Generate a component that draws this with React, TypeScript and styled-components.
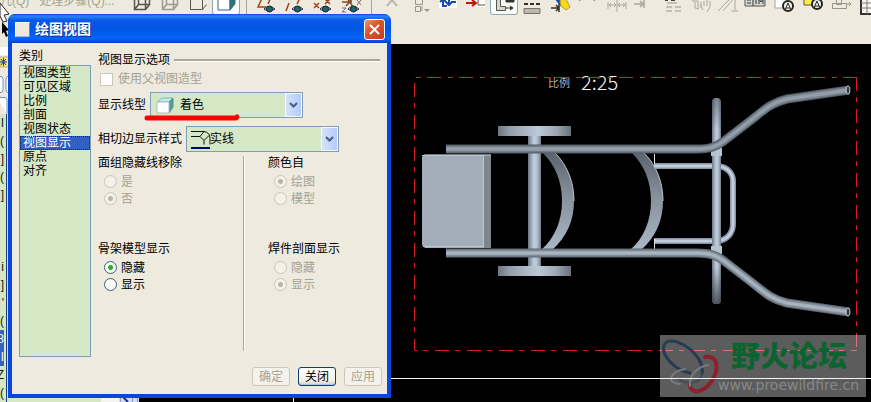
import React, { useState } from "react";
import styled, { createGlobalStyle, css } from "styled-components";

const GlobalStyle = createGlobalStyle`
  * { box-sizing: border-box; }
  body {
    margin: 0;
    background: #000;
    color: #000;
    font: 12px/14px "Liberation Sans", "Noto Sans CJK SC", sans-serif;
  }
  button, select, input { font: inherit; }
`;

const Page = styled.main`
  position: relative;
  display: flex;
  flex-direction: column;
  min-height: 100vh;
  overflow: hidden;
`;

/* ---------- toolbar ---------- */

const Toolbar = styled.header`
  display: flex;
  align-items: flex-start;
  height: 44px;
  overflow: hidden;
  background: #eeeade;
`;

const Strip = styled.div`
  display: flex;
  align-items: center;
  height: 28px;
  margin-top: -13px;
`;

const StepsLabel = styled.span`
  width: 128px;
  color: #a5a294;
  white-space: pre;
`;

const ToolButton = styled.button<{ $active?: boolean }>`
  width: 28px;
  height: 28px;
  padding: 0;
  border: 0;
  background: none;
  flex: none;
  ${(p) =>
    p.$active &&
    css`
      background: #fbfbf8;
      border-radius: 3px;
      box-shadow: inset 0 0 0 1px #8fa8bd;
    `}
  svg { display: block; }
`;

const Divider = styled.span`
  flex: none;
  width: 13px;
  height: 28px;
  background: linear-gradient(90deg, transparent 6px, #a8a597 6px, #a8a597 7px, transparent 7px);
`;

const Ico = ({ children }: { children: React.ReactNode }) => (
  <svg width="28" height="28" viewBox="0 1 28 28" fill="none" stroke="#76736a" strokeWidth="1">
    {children}
  </svg>
);

const Eye = () => (
  <g>
    <path d="M11 23Q16 18 22 23Q16 27 11 23Z" fill="#fff" stroke="#222" />
    <circle cx="16.500" cy="23" r="3" fill="#176d62" stroke="#123" />
  </g>
);

const Cube = ({ faint }: { faint?: boolean }) => (
  <g stroke={faint ? "#9c998d" : "#57544d"}>
    <path d="M6.500 10.500h11v13h-11zM10.500 6.500h11v12h-11zM6.500 23.500l4-5M17.500 23.500l4-5" strokeWidth="1.500" />
  </g>
);

const Hand = () => <path d="M6 15h6v7M9 16v6l4 1M15 22v-6M17 24l-3-5M18 15v5M21 14v6M24 15v6l-3 5" stroke="#aaa79b" />;

const tools: { name: string; active?: boolean; art: React.ReactNode }[][] = [
  [
    { name: "线框", art: <Cube /> },
    { name: "隐藏线", art: <Cube faint /> },
    { name: "无隐藏线", art: <path d="M6.500 8.500h12v15h-12zM18.500 23.500l4-5" stroke="#57544d" /> },
    {
      name: "着色",
      active: true,
      art: (
        <>
          <path d="M6 9h12v15H6z" fill="#fff" stroke="#3f6a78" />
          <path d="M18 9l5-5v14l-5 6z" fill="#28747d" stroke="#3f6a78" />
        </>
      ),
    },
  ],
  [
    { name: "基准平面", art: <><path d="M10 10L5 21h8M19 9l-4 9" stroke="#9b4519" strokeWidth="1.500" /><Eye /></> },
    { name: "基准轴", art: <><path d="M8 17l-3 8M11 10l-2 4M20 10l-4 8" stroke="#9b4519" strokeWidth="1.500" /><Eye /></> },
    { name: "基准点", art: <><path d="M5 17l5 5m0-5l-5 5M16 13l5 5m0-5l-5 5" stroke="#9b4519" strokeWidth="1.500" /><Eye /></> },
    { name: "坐标系", art: <><path d="M5 16h10M10 12l6 9M16 12l-7 8" stroke="#7d482c" strokeWidth="1.500" /><path d="M5 22h4l-4 4h4M20 14l4 5m0-5l-4 5" /><Eye /></> },
  ],
  [
    { name: "剪切", art: <path d="M9 20l5-6 5 6M14 10v4" stroke="#aaa79b" strokeWidth="1.500" /> },
    { name: "排列", art: <><path d="M9.500 13.500h7v5h-7zM9.500 20.500h5v5h-5zM16 20v5" stroke="#98958a" /><path d="M18 23h6l-3 3z" fill="#98958a" stroke="none" /></> },
    { name: "重新生成", art: <><path d="M5 8h18v14H5z" fill="#fff" stroke="none" /><path d="M13 20H9v-7m-3 3l3-3 3 3M15 13v7m-3-4l3 3 3-3M17 16h5" stroke="#164cac" strokeWidth="2" /></> },
    { name: "移动视图", art: <><path d="M14 10h9v11h-9z" fill="#fff" stroke="none" /><path d="M16 12v7h7" stroke="#55564f" /><path d="M4 17h9m-3-3l4 3-4 3" stroke="#c41313" strokeWidth="2" /></> },
    { name: "锁定视图", active: true, art: <><path d="M6.500 8v16.500h9v-4h-5V8z" fill="#d7d6cd" stroke="#55564f" /><path d="M16 13h8v3h-8zM16 22h7m-3-2l3 2-3 2" fill="#33322f" stroke="#33322f" /></> },
    { name: "线型", art: <><path d="M6 18h18" stroke="#33322f" strokeDasharray="4 2" strokeWidth="2" /><path d="M6 22.500h16v5H6z" fill="#bab8ac" /></> },
    { name: "清理尺寸", art: <><path d="M9 10l7 9" stroke="#164cac" strokeWidth="4" /><path d="M14 15l4-6 6 12-4 3-5-4z" fill="#f6d821" stroke="#b99e1a" /><path d="M5 22h8m-3-3l3 3-3 3M13 18v8" stroke="#33322f" strokeWidth="1.500" /></> },
    { name: "角度", art: <path d="M9 12l-4 3M17 12l4 3" stroke="#8c897e" /> },
    { name: "尺寸", art: <path d="M6 16v7m9-13v16m9-10v7M7 19h7m2 0h7m-14-2l-2 2 2 2m3-4l2 2-2 2m6-4l-2 2 2 2m3-4l2 2-2 2" stroke="#aaa79b" /> },
    { name: "对齐尺寸", art: <path d="M4 18h9m-3-3l3 3-3 3M14 14v8" stroke="#aaa79b" strokeWidth="1.500" /> },
    { name: "注释", art: <><path d="M7 14h3m3 0h4" stroke="#403f3a" strokeWidth="2" /><path d="M9 17h10M8 21h6m3 0h6M8 25h6m3 0h6" stroke="#98958a" /></> },
    { name: "拖动", art: <Hand /> },
    { name: "倾斜", art: <path d="M4 25l15-15M9 25l12-14M21 14v10M17 25h7" stroke="#aaa79b" /> },
    { name: "公差", art: <><path d="M3 10h20v10H3z" fill="#d2d9d3" stroke="#55564f" /><path d="M11 11v9M5 14h4m-4 3h4M14 14v4m3-5v5m0-5l2 3 2-3v5" stroke="#33322f" /></> },
    { name: "几何注释", art: <><path d="M5 10h11v12H5z" fill="#fff" stroke="#a7a499" /><circle cx="18" cy="20" r="5" fill="#f5f5ef" stroke="#25231f" strokeWidth="2" /><path d="M15 24l3-7 3 7m-5-2h4" stroke="#25231f" /></> },
    { name: "符号", art: <><path d="M6 10h11v9H6z" fill="#faef45" stroke="#55564f" /><circle cx="19" cy="18" r="5" fill="#f5f5ef" stroke="#25231f" strokeWidth="2" /><path d="M16 22l3-7 3 7m-5-2h4" stroke="#25231f" /></> },
    { name: "插入", art: <path d="M6.500 17.500h14v5h-14zM10.500 12.500h5v6h-5zM20 18h5m-2-2l2 2-2 2" stroke="#98958a" /> },
    { name: "表", art: <><path d="M7 12h16v16H7z" fill="#f6f4ec" stroke="#33322f" strokeWidth="2" /><path d="M7 17h16M7 22h16M13 13v15M19 13v15" stroke="#7c7a72" /></> },
  ],
];

/* ---------- workspace ---------- */

const Workspace = styled.div`
  flex: 1;
  display: flex;
  align-items: flex-start;
`;

const Sidebar = styled.aside`
  width: 139px;
  flex: none;
  align-self: stretch;
  display: flex;
  background: #f4f3ef;
`;

const TreePane = styled.div`
  width: 101px;
  background: linear-gradient(90deg, transparent 6px, #1f3f76 6px, #1f3f76 7px, transparent 7px) #d5e8c6;
`;

const TreeHead = styled.div`
  height: 70px;
  background: #eeeade;
  svg { display: block; }
`;

const TreeRow = styled.div<{ $selected?: boolean }>`
  display: flex;
  justify-content: flex-end;
  height: 18px;
  width: 4px;
  line-height: 18px;
  color: ${(p) => (p.$selected ? "#fff" : "#16180f")};
  background: ${(p) => (p.$selected ? "#3564c0" : "transparent")};
`;

const ScrollTrack = styled.div`
  flex: 1;
  display: flex;
  align-items: flex-end;
  justify-content: flex-end;
`;

const Viewport = styled.section`
  flex: 1;
  min-width: 0;
  background: #000;
  svg { display: block; width: 100%; }
`;

const Annotation = styled.text<{ $large?: boolean }>`
  fill: #f4f4f4;
  font-family: "Liberation Sans Narrow", "Noto Sans CJK SC", sans-serif;
  font-weight: 300;
  font-size: ${(p) => (p.$large ? 20 : 11)}px;
`;

const MarkTitle = styled.text`
  fill: #0b6430;
  font: 900 29px "Noto Sans CJK SC", sans-serif;
`;

const MarkUrl = styled.text`
  fill: #85888a;
  font: 14px "DejaVu Sans", sans-serif;
`;

const handle = "M446 149H697C709 149 716 147 724 141L750 121C763 111 770 103 787 99L849 90";
const lowerHandle = "M446 253H697C709 253 716 255 724 261L750 281C763 291 770 299 787 303L849 312";
const rib = "M555 153C568 166 574 183 574 201C574 220 567 237 552 250H541C555 238 562 220 562 201C562 181 555 165 543 153Z";
const loop = "M654 166H718C727 167 733 173 733 181V224C733 233 727 240 718 241H654";

const Tube = ({ d, tone }: { d: string; tone: string[] }) => (
  <g fill="none">
    <path d={d} stroke={tone[0]} strokeWidth="9" />
    <path d={d} stroke={tone[1]} strokeWidth="7" />
    <path d={d} stroke={tone[2]} strokeWidth="4" />
    <path d={d} stroke={tone[3]} strokeWidth="2" />
  </g>
);

function Drawing() {
  return (
    <svg viewBox="139 44 732 358" role="img" aria-label="比例 2:25">
      <defs>
        <linearGradient id="post">
          <stop offset="0" stopColor="#6c7784" />
          <stop offset=".45" stopColor="#c0cedd" />
          <stop offset=".7" stopColor="#b3c0cf" />
          <stop offset="1" stopColor="#707b88" />
        </linearGradient>
        <linearGradient id="wheel">
          <stop offset="0" stopColor="#6e7780" />
          <stop offset=".15" stopColor="#939da7" />
          <stop offset=".55" stopColor="#bccad8" />
          <stop offset=".8" stopColor="#9ca7b3" />
          <stop offset="1" stopColor="#68717b" />
        </linearGradient>
        <linearGradient id="ribShade" x1="0" y1="0" x2="0" y2="1">
          <stop offset="0" stopColor="#5b636d" />
          <stop offset=".45" stopColor="#87919c" />
          <stop offset="1" stopColor="#aab7c5" />
        </linearGradient>
        <linearGradient id="postEnds" x1="0" y1="0" x2="0" y2="1">
          <stop offset="0" stopColor="#333a42" stopOpacity=".5" />
          <stop offset=".15" stopColor="#333a42" stopOpacity="0" />
          <stop offset=".82" stopColor="#333a42" stopOpacity="0" />
          <stop offset="1" stopColor="#333a42" stopOpacity=".8" />
        </linearGradient>
      </defs>

      <Annotation x="548" y="87">比例</Annotation>
      <Annotation x="581" y="90" $large>2:25</Annotation>
      <path d="M857 77.500H414.500V350.500H857M856.500 77V351" fill="none" stroke="#d81b22" strokeDasharray="14 6 5 7" />

      <path d="M422 157l3-3h66v94h-66l-3-3z" fill="#a3adb9" />
      <path d="M484 156h7v92h-7z" fill="#7d868d" />
      <path d="M422 155.500h61.500V247M423 246.500h61" fill="none" stroke="#b9c8cf" />
      <path d="M425 154.500h66" stroke="#6c767d" />

      <path d={rib} fill="url(#ribShade)" />
      <path d="M555 153C568 166 574 183 574 201" fill="none" stroke="#bac5cf" />
      <g transform="translate(89 0)">
        <path d={rib} fill="url(#ribShade)" />
        <path d="M555 153C568 166 574 183 574 201" fill="none" stroke="#bac5cf" />
      </g>

      <path d="M498 126h73v10h-73zM498 266h73v10h-73z" fill="url(#wheel)" />
      <path d="M528 136h13v130h-13z" fill="url(#post)" />

      <g fill="none">
        <path d={loop} stroke="#8794a3" strokeWidth="6" />
        <path d={loop} stroke="#c0cddd" strokeWidth="3" />
        <path d="M654.500 154V164M654.500 239V249" stroke="#dce3e9" />
      </g>
      <rect x="712" y="98" width="9" height="206" rx="4" fill="url(#post)" />
      <rect x="712" y="98" width="9" height="206" rx="4" fill="url(#postEnds)" />
      <path d="M711 147h11v9h-11zM711 246h11v9h-11z" fill="#b6c4d2" />

      <Tube d={handle} tone={["#525a63", "#727c87", "#8e99a5", "#939eaa"]} />
      <Tube d={lowerHandle} tone={["#5e6670", "#7e8994", "#9ca8b4", "#a8b4c0"]} />
      <g fill="#343b42" stroke="#c0cbd4">
        <ellipse cx="848" cy="90" rx="2" ry="4" />
        <ellipse cx="848" cy="312" rx="2" ry="4" />
      </g>

      <path d="M660 335h206v62H660z" fill="#fff" fillOpacity=".36" />
      <g fill="none" strokeLinecap="round">
        <path d="M690 373C678 371 667 361 664 352C661 340 672 338 684 345C696 352 704 364 702 374" stroke="#263c50" strokeWidth="3" />
        <path d="M702 374C700 384 688 385 678 379" stroke="#3f4d59" strokeWidth="2" />
        <path d="M705 357C718 355 719 368 713 379C706 391 693 396 690 386" stroke="#8e1f2c" strokeWidth="4" />
        <path d="M690 386C689 375 697 367 708 365M680 384C667 384 668 372 685 369" stroke="#777b80" strokeWidth="2" />
      </g>
      <MarkTitle x="731" y="367">野火论坛</MarkTitle>
      <MarkUrl x="718" y="390">www.proewildfire.cn</MarkUrl>
      <path d="M139 378.500H871M293.500 378V402" stroke="#f4f4f4" />
    </svg>
  );
}

/* ---------- dialog ---------- */

const Dialog = styled.form`
  position: absolute;
  left: 8px;
  top: 14px;
  width: 383px;
  border: solid #0a46dc;
  border-width: 0 4px 4px;
  border-radius: 7px 7px 0 0;
  background: #eeeade;
`;

const TitleBar = styled.div`
  display: flex;
  align-items: center;
  gap: 5px;
  height: 29px;
  margin: 0 -4px;
  padding: 1px 6px 0 7px;
  border-radius: 7px 7px 0 0;
  background: linear-gradient(#0a49c8 0, #2a83f8 2px, #0a5ae6 6px, #0055e5 15px, #0565fb 24px, #0356e0 27px, #0340b8 29px);
`;

const TitleIcon = styled.span`
  width: 15px;
  height: 15px;
  background: #ece9de;
  border: 1px solid #fff;
  border-right-color: #c76b54;
  border-bottom-color: #a8b7d8;
`;

const Title = styled.h1`
  flex: 1;
  margin: 0;
  font-size: 14px;
  line-height: 18px;
  font-weight: 700;
  color: #fff;
  text-shadow: 1px 1px 0 #0b2f93;
`;

const CloseButton = styled.button`
  width: 21px;
  height: 21px;
  padding: 0;
  border: 1px solid #fff;
  border-radius: 3px;
  background: linear-gradient(135deg, #f0967a, #df5330 40%, #c83c17);
  svg { display: block; margin: auto; }
`;

const Body = styled.div`
  display: flex;
  gap: 7px;
  padding: 6px 5px 0 7px;
`;

const Categories = styled.div`
  width: 72px;
  flex: none;
`;

const CategoryList = styled.ul`
  height: 292px;
  margin: 2px 0 0;
  padding: 0;
  list-style: none;
  border: 1px solid #7f9db9;
  background: #d5e8c6;
`;

const Category = styled.button<{ $selected: boolean }>`
  display: block;
  width: 100%;
  height: 14px;
  padding: 0 0 0 3px;
  border: 0;
  text-align: left;
  line-height: 14px;
  color: #000;
  background: none;
  ${(p) =>
    p.$selected &&
    css`
      color: #fff;
      background: #2f60c2;
      outline: 1px dotted #1d2a44;
      outline-offset: -1px;
    `}
`;

const Options = styled.div`
  flex: 1;
  min-width: 0;
`;

const Heading = styled.h2`
  display: flex;
  align-items: center;
  gap: 4px;
  margin: 3px 2px 3px 0;
  font-size: 12px;
  font-weight: 400;
  line-height: 16px;
  &::after {
    content: "";
    flex: 1;
    height: 2px;
    background: #a8a698;
    border-bottom: 1px solid #fff;
  }
`;

const CheckLabel = styled.label`
  display: flex;
  align-items: center;
  gap: 5px;
  height: 16px;
  padding-left: 2px;
  color: #a5a294;
  input {
    appearance: none;
    width: 13px;
    height: 13px;
    margin: 0;
    border: 1px solid #cbc8bb;
    background: #fff;
  }
`;

const Field = styled.div`
  display: flex;
  align-items: center;
  gap: 4px;
  margin-top: 5px;
  & + & { margin-top: 8px; }
`;

const Combo = styled.div`
  position: relative;
  width: 153px;
  height: 26px;
`;

const Select = styled.select<{ $inset: number }>`
  appearance: none;
  display: block;
  width: 100%;
  height: 100%;
  padding: 0 20px 0 ${(p) => p.$inset}px;
  border: 1px solid #7f9db9;
  border-radius: 0;
  color: #000;
  background: #d5e8c6;
`;

const ComboIcon = styled.svg`
  position: absolute;
  left: 4px;
  top: 2px;
  pointer-events: none;
`;

const Arrow = styled.span`
  position: absolute;
  right: 1px;
  top: 1px;
  bottom: 1px;
  width: 17px;
  border: 1px solid #f4f8ff;
  background: linear-gradient(90deg, #d6e2fc, #b5cbf7);
  pointer-events: none;
  display: grid;
  place-items: center;
`;

const Marker = styled.svg`
  position: absolute;
  left: -6px;
  top: 20px;
  pointer-events: none;
`;

const Groups = styled.div`
  display: grid;
  grid-template-columns: 145px 1fr;
  margin-top: 4px;
`;

const Column = styled.div<{ $divided?: boolean }>`
  display: flex;
  flex-direction: column;
  gap: 35px;
  height: 195px;
  ${(p) =>
    p.$divided &&
    css`
      padding-left: 24px;
      border-left: 1px solid #a8a698;
      box-shadow: inset 1px 0 #fff;
    `}
`;

const Group = styled.fieldset`
  margin: 0;
  padding: 0;
  border: 0;
  legend {
    padding: 0;
    margin-bottom: 3px;
    line-height: 14px;
  }
`;

const RadioLabel = styled.label<{ $off?: boolean }>`
  display: flex;
  align-items: center;
  gap: 4px;
  height: 17px;
  padding-left: 6px;
  color: ${(p) => (p.$off ? "#a5a294" : "#000")};
  input {
    appearance: none;
    width: 13px;
    height: 13px;
    margin: 0;
    border: 1px solid ${(p) => (p.$off ? "#cbc8bb" : "#3b6080")};
    border-radius: 50%;
    background: ${(p) => (p.$off ? "#f3f1e8" : "#fbfbf9")};
  }
  input:checked {
    background: radial-gradient(circle, ${(p) => (p.$off ? "#b8b5a8" : "#2faa2d")} 2px, ${(p) => (p.$off ? "#f3f1e8" : "#fbfbf9")} 3px);
  }
`;

const Actions = styled.div`
  display: flex;
  justify-content: flex-end;
  gap: 8px;
  padding: 10px 5px 8px;
`;

const ActionButton = styled.button`
  width: 38px;
  height: 19px;
  padding: 0;
  border: 1px solid #123f72;
  border-radius: 3px;
  line-height: 14px;
  color: #000;
  background: linear-gradient(#fff, #f1efe6 75%, #d5d1c3);
  box-shadow: inset 0 -1px #a9bfe0;
  &:disabled {
    color: #a5a294;
    border-color: #cbc8bb;
    background: #f4f2ea;
    box-shadow: none;
  }
`;

const Cursor = styled.svg`
  position: absolute;
  left: 0;
  top: 2px;
`;

const categories = ["视图类型", "可见区域", "比例", "剖面", "视图状态", "视图显示", "原点", "对齐"];
const treeTails = ["I", "(", "]", "(", "]", "", "", "", "i", "]", "'", "(", "8", "I", "Z", "("];

const ArrowMark = () => (
  <Arrow>
    <svg width="9" height="7" viewBox="0 0 9 7">
      <path d="M1 1l3.500 3.500L8 1" fill="none" stroke="#465b85" strokeWidth="2" />
    </svg>
  </Arrow>
);

function RadioGroup({ legend, options, initial, off }: { legend: string; options: string[]; initial: string; off?: boolean }) {
  const [value, setValue] = useState(initial);
  return (
    <Group>
      <legend>{legend}</legend>
      {options.map((o) => (
        <RadioLabel key={o} $off={off}>
          <input type="radio" name={legend} disabled={off} checked={value === o} onChange={() => setValue(o)} />
          {o}
        </RadioLabel>
      ))}
    </Group>
  );
}

export default function App() {
  const [category, setCategory] = useState("视图显示");
  return (
    <Page>
      <GlobalStyle />
      <Toolbar>
        <Strip>
          <StepsLabel>{"几(Q)   处理步骤(Q)..."}</StepsLabel>
          {tools.map((group, i) => (
            <React.Fragment key={i}>
              {i > 0 && <Divider />}
              {group.map((t) => (
                <ToolButton key={t.name} type="button" aria-label={t.name} $active={t.active}>
                  <Ico>{t.art}</Ico>
                </ToolButton>
              ))}
            </React.Fragment>
          ))}
        </Strip>
      </Toolbar>

      <Workspace>
        <Sidebar>
          <TreePane>
            <TreeHead>
              <svg width="9" height="70" viewBox="0 0 9 70">
                <path d="M0 3h9v8H0z" fill="#fff" />
                <path d="M0 13h9v10H0z" fill="#f7e879" stroke="#b8ad83" />
                <path d="M0 18h7M3.500 14v8M1 15l5 6M6 15l-5 6" stroke="#1e3d9a" />
                <path d="M-3 32.500h4q2 0 2 3v10q0 3-2 3h-4M9 32.500H8q-2 0-2 3v10q0 3 2 3h1M-3 53.500h8q2 0 2 3v13" fill="#fff" stroke="#7290b5" />
              </svg>
            </TreeHead>
            {treeTails.map((t, i) => (
              <TreeRow key={i} $selected={i === 12 || i === 13}>{t}</TreeRow>
            ))}
          </TreePane>
          <ScrollTrack>
            <svg width="20" height="5" viewBox="0 0 20 5">
              <path d="M0 0h20v5H0z" fill="#cfdcf7" />
              <path d="M1.500 0v5M13.500 0v5M18.500 0v5" stroke="#8d9cc0" />
              <path d="M4 0l5 5" stroke="#1c2f9c" strokeWidth="2" />
            </svg>
          </ScrollTrack>
        </Sidebar>
        <Viewport>
          <Drawing />
        </Viewport>
      </Workspace>

      <Cursor width="10" height="36" viewBox="0 0 10 36">
        <path d="M0 1l9 11-5 1 3 6-4 1-3-6z" fill="#fff" stroke="#222" />
        <path d="M2 20l7 8-3 1 2 5-2 1-2-5-2 2z" fill="#000" />
      </Cursor>

      <Dialog onSubmit={(e) => e.preventDefault()}>
        <TitleBar>
          <TitleIcon />
          <Title>绘图视图</Title>
          <CloseButton type="button" aria-label="关闭窗口">
            <svg width="13" height="13" viewBox="0 0 13 13">
              <path d="M2 2l9 9M11 2l-9 9" stroke="#fff" strokeWidth="2" />
            </svg>
          </CloseButton>
        </TitleBar>
        <Body>
          <Categories>
            <div id="category-label">类别</div>
            <CategoryList aria-labelledby="category-label">
              {categories.map((c) => (
                <li key={c}>
                  <Category type="button" $selected={c === category} onClick={() => setCategory(c)}>
                    {c}
                  </Category>
                </li>
              ))}
            </CategoryList>
          </Categories>
          <Options>
            <Heading>视图显示选项</Heading>
            <CheckLabel>
              <input type="checkbox" disabled />
              使用父视图造型
            </CheckLabel>
            <Field>
              <label htmlFor="display-style">显示线型</label>
              <Combo>
                <Select id="display-style" $inset={29}>
                  <option>着色</option>
                </Select>
                <ComboIcon width="20" height="20" viewBox="0 0 20 20">
                  <path d="M3 8l5-4h11l-4 4z" fill="#b9f0ef" stroke="#84b5b5" />
                  <path d="M15 8l4-4v9l-4 6z" fill="#4f9ca1" stroke="#5b8c90" />
                  <path d="M3 8h12v11H3z" fill="#fff" stroke="#a9bdbd" />
                </ComboIcon>
                <ArrowMark />
                <Marker width="98" height="12" viewBox="0 0 98 12">
                  <path d="M3 6H92L93 5" fill="none" stroke="#f70505" strokeWidth="5" strokeLinecap="round" strokeLinejoin="round" />
                </Marker>
              </Combo>
            </Field>
            <Field>
              <label htmlFor="tangent-style">相切边显示样式</label>
              <Combo>
                <Select id="tangent-style" $inset={23}>
                  <option>实线</option>
                </Select>
                <ComboIcon width="22" height="22" viewBox="0 0 22 22" fill="none" stroke="#111">
                  <path d="M1 3.500h13q6 1 6 7v6M1 8.500h9l4 4v4M10 8.500l4-5M14 12.500l5-5" />
                  <path d="M1 20h19" stroke="#000080" strokeWidth="2" />
                </ComboIcon>
                <ArrowMark />
              </Combo>
            </Field>
            <Groups>
              <Column>
                <RadioGroup legend="面组隐藏线移除" options={["是", "否"]} initial="否" off />
                <RadioGroup legend="骨架模型显示" options={["隐藏", "显示"]} initial="隐藏" />
              </Column>
              <Column $divided>
                <RadioGroup legend="颜色自" options={["绘图", "模型"]} initial="绘图" off />
                <RadioGroup legend="焊件剖面显示" options={["隐藏", "显示"]} initial="显示" off />
              </Column>
            </Groups>
          </Options>
        </Body>
        <Actions>
          <ActionButton type="button" disabled>确定</ActionButton>
          <ActionButton type="button">关闭</ActionButton>
          <ActionButton type="button" disabled>应用</ActionButton>
        </Actions>
      </Dialog>
    </Page>
  );
}
